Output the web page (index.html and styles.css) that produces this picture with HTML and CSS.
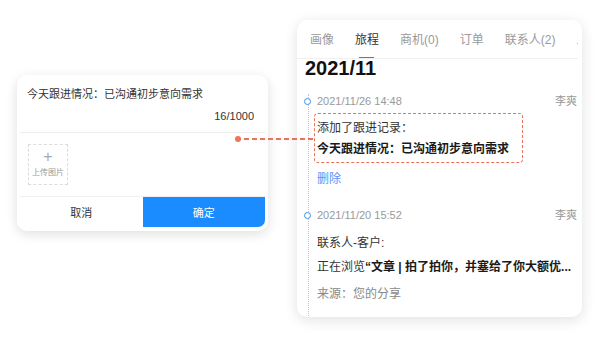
FILE: index.html
```html
<!DOCTYPE html>
<html lang="zh-CN">
<head>
  <meta charset="UTF-8" />
  <title>跟进记录</title>
  <link rel="stylesheet" href="styles.css">
</head>
<body>
  <div class="stage">

    <!-- Follow-up editor dialog -->
    <div class="editor">
      <div class="editor-text">今天跟进情况：已沟通初步意向需求</div>
      <div class="editor-count">16/1000</div>
      <div class="editor-divider"></div>
      <div class="upload">
        <span class="upload-plus">+</span>
        <span class="upload-label">上传图片</span>
      </div>
      <div class="editor-footer">
        <button class="btn-cancel">取消</button>
        <button class="btn-ok">确定</button>
      </div>
    </div>

    <!-- Customer timeline card -->
    <div class="timeline-card">
      <div class="tabs">
        <span class="tab">画像</span>
        <span class="tab active">旅程</span>
        <span class="tab">商机(0)</span>
        <span class="tab">订单</span>
        <span class="tab">联系人(2)</span>
        <span class="tab">二维码</span>
      </div>
      <div class="month">2021/11</div>

      <div class="timeline">
        <div class="item">
          <span class="dot"></span>
          <div class="item-head">
            <span>2021/11/26 14:48</span>
            <span>李爽</span>
          </div>
          <div class="highlight">
            <div class="line">添加了跟进记录：</div>
            <div class="line bold">今天跟进情况：已沟通初步意向需求</div>
          </div>
          <div class="delete">删除</div>
        </div>

        <div class="item second">
          <span class="dot"></span>
          <div class="item-head">
            <span>2021/11/20 15:52</span>
            <span>李爽</span>
          </div>
          <div class="line contact">联系人-客户:</div>
          <div class="line browse">正在浏览<b>“文章 | 拍了拍你，并塞给了你大额优...</b></div>
          <div class="line source">来源：您的分享</div>
        </div>
      </div>
    </div>

    <!-- Dashed connector between the two cards -->
    <div class="connector"><span class="connector-dot"></span></div>
  </div>
</body>
</html>
```

FILE: styles.css
```css
* {
  box-sizing: border-box;
}

body {
  margin: 0;
  background: #fff;
  font-family: "Liberation Sans", "Noto Sans CJK SC", sans-serif;
  color: #333;
  overflow: hidden;
}

.stage {
  position: relative;
  display: flex;
  align-items: flex-start;
  width: 600px;
  height: 337px;
}

/* Left dialog */
.editor {
  width: 251px;
  margin: 75px 0 0 17px;
  padding: 12px 3px 4px;
  background: #fff;
  border-radius: 10px;
  box-shadow: 0 3px 12px rgba(0, 0, 0, 0.13);
}

.editor-text {
  padding-left: 7px;
  font-size: 11px;
  line-height: 14px;
  color: #333;
}

.editor-count {
  margin-top: 8px;
  padding-right: 11px;
  text-align: right;
  font-size: 11px;
  line-height: 14px;
  color: #333;
}

.editor-divider {
  height: 1px;
  margin-top: 9px;
  background: #ececec;
}

.upload {
  width: 40px;
  height: 41px;
  margin: 11px 0 0 8px;
  border: 1px dashed #dcdcdc;
  display: flex;
  flex-direction: column;
  align-items: center;
  color: #999;
}

.upload-plus {
  font-size: 16px;
  line-height: 16px;
  margin-top: 4px;
  color: #aaa;
}

.upload-label {
  margin-top: 2px;
  font-size: 8px;
  line-height: 12px;
}

.editor-footer {
  display: flex;
  margin-top: 11px;
  border-top: 1px solid #efefef;
  height: 31px;
}

.editor-footer button {
  flex: 1;
  border: none;
  font-family: inherit;
  font-size: 11px;
  padding: 0;
}

.btn-cancel {
  background: #fff;
  color: #333;
}

.btn-ok {
  background: #1a8cff;
  color: #fff;
  border-radius: 0 0 7px 0;
}

/* Right timeline card */
.timeline-card {
  width: 285px;
  height: 297px;
  margin: 20px 0 0 29px;
  background: #fff;
  border-radius: 10px;
  box-shadow: 0 3px 14px rgba(0, 0, 0, 0.12);
  overflow: hidden;
}

.tabs {
  display: flex;
  gap: 21px;
  height: 39px;
  margin-right: 4px;
  padding: 12px 0 0 13px;
  border-bottom: 1px solid #f0f0f0;
  overflow: hidden;
  white-space: nowrap;
}

.tab {
  position: relative;
  flex: none;
  font-size: 12px;
  line-height: 16px;
  color: #9a9a9a;
}

.tab.active {
  color: #333;
}

.tab.active::after {
  content: "";
  position: absolute;
  left: 4px;
  right: 5px;
  top: 25px;
  height: 2px;
  background: #1a8cff;
}

.month {
  padding-left: 8px;
  font-size: 20px;
  font-weight: bold;
  line-height: 20px;
  color: #111;
  margin-top: -1px;
}

.timeline {
  margin: 16px 0 0 11px;
  border-left: 1px dotted #a9cdef;
  height: 240px;
}

.item {
  position: relative;
  padding: 0 5px 0 8px;
}

.dot {
  position: absolute;
  left: -5px;
  top: 4px;
  width: 7px;
  height: 7px;
  border: 1.5px solid #3d8fe0;
  border-radius: 50%;
  background: #fff;
}

.item-head {
  display: flex;
  justify-content: space-between;
  font-size: 11px;
  line-height: 14px;
  color: #999;
}

.highlight {
  width: 209px;
  margin: 5px 0 0 -3px;
  padding: 5px 2px 4px;
  border: 1.5px dashed #ea7259;
  border-radius: 4px;
}

.line {
  font-size: 12px;
  line-height: 18px;
  color: #333;
  white-space: nowrap;
}

.highlight .line.bold {
  margin-top: 3px;
}

.bold,
.browse b {
  font-weight: bold;
  color: #1a1a1a;
}

.delete {
  margin-top: 8px;
  font-size: 12px;
  line-height: 16px;
  color: #5b8ff9;
}

.item.second {
  margin-top: 21px;
}

.contact {
  margin-top: 12px;
}

.browse {
  margin-top: 6px;
}

.source {
  margin-top: 9px;
  color: #888;
}

/* Connector */
.connector {
  position: absolute;
  left: 236px;
  top: 138px;
  width: 78px;
  height: 2px;
  background: repeating-linear-gradient(90deg, #ea7259 0 5px, transparent 5px 8px);
}

.connector-dot {
  position: absolute;
  left: -1px;
  top: -2px;
  width: 6px;
  height: 6px;
  border-radius: 50%;
  background: #f07456;
}
```
